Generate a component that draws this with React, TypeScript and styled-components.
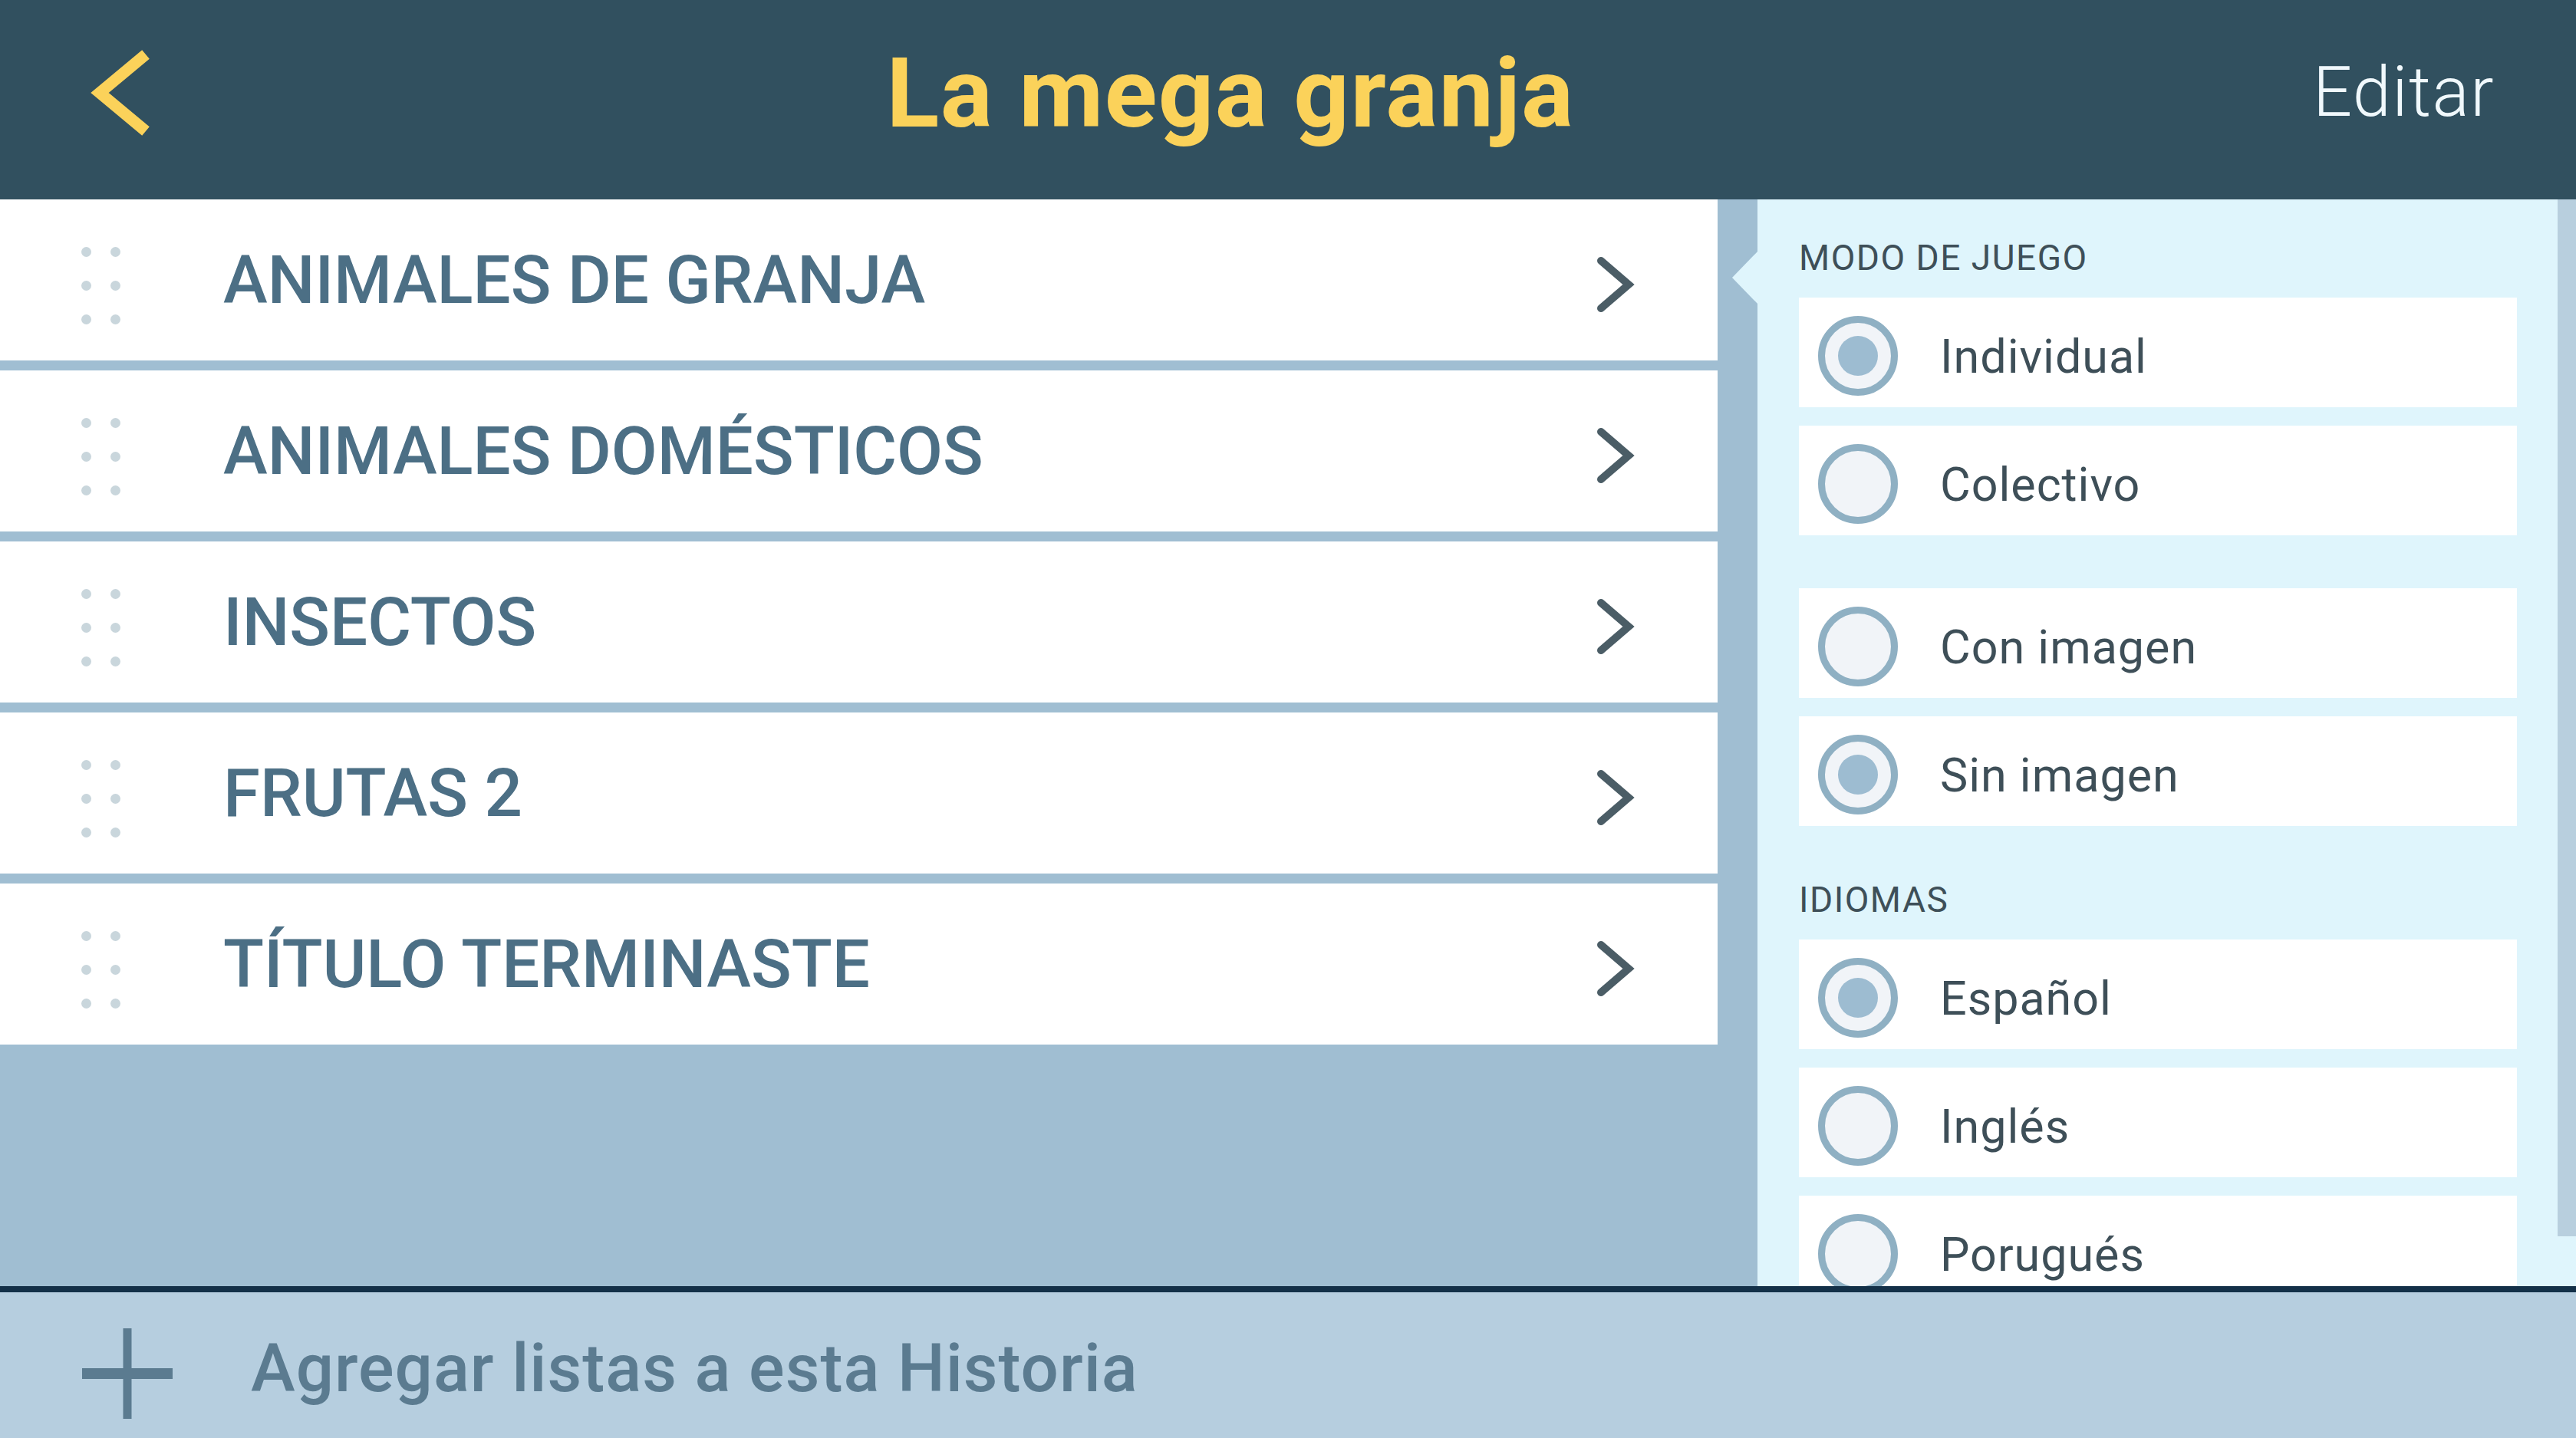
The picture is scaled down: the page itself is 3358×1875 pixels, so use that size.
import React from 'react';
import styled, { createGlobalStyle } from 'styled-components';

const colors = {
    header: '#31505f',
    title: '#fbd25a',
    editar: '#f0f8fc',
    listBg: '#a0bed2',
    rowText: '#4c6f85',
    chevron: '#4b5d66',
    dot: '#c9d6dc',
    panelBg: '#dff5fc',
    optionText: '#3e4f58',
    radioRing: '#8fb0c3',
    radioFill: '#f1f4f8',
    radioDot: '#9dbcd1',
    bottomLine: '#133048',
    bottomBg: '#b6cedf',
    addText: '#5b7b90',
    scroll: '#b8cfde'
};

const GlobalStyle = createGlobalStyle`
    html, body {
        margin: 0;
        padding: 0;
        background: ${colors.bottomBg};
    }
    * {
        box-sizing: border-box;
    }
`;

const Screen = styled.div`
    width: 3358px;
    height: 1875px;
    display: flex;
    flex-direction: column;
    overflow: hidden;
    font-family: Roboto, "Open Sans", sans-serif;
`;

const Header = styled.header`
    flex: none;
    height: 260px;
    background: ${colors.header};
    display: grid;
    grid-template-columns: 400px 1fr 400px;
    align-items: center;
    padding-bottom: 18px;
`;

const BackButton = styled.div`
    padding-left: 118px;
    display: flex;
    align-items: center;
`;

const Title = styled.h1`
    margin: 0;
    padding-right: 150px;
    text-align: center;
    color: ${colors.title};
    font-size: 127px;
    font-weight: 700;
    line-height: 1;
    letter-spacing: 1.5px;
`;

const EditButton = styled.div`
    justify-self: end;
    padding-right: 106px;
    color: ${colors.editar};
    font-size: 90px;
    font-weight: 300;
    line-height: 1;
    letter-spacing: 1.5px;
`;

const Main = styled.main`
    flex: none;
    height: 1417px;
    display: flex;
`;

const ListPane = styled.section`
    flex: none;
    width: 2291px;
    padding-right: 52px;
    background: ${colors.listBg};
    display: flex;
    flex-direction: column;
    gap: 13px;
`;

const Row = styled.div`
    height: 210px;
    background: #ffffff;
    display: flex;
    align-items: center;
    padding-left: 106px;
    padding-right: 106px;
`;

const DragHandle = styled.div`
    display: grid;
    grid-template-columns: repeat(2, 13px);
    grid-auto-rows: 13px;
    column-gap: 25px;
    row-gap: 31px;
    margin-top: 14px;
    margin-right: 134px;
`;

const Dot = styled.span`
    border-radius: 50%;
    background: ${colors.dot};
`;

const RowTitle = styled.div`
    flex: 1;
    color: ${colors.rowText};
    font-size: 87px;
    font-weight: 500;
    line-height: 1;
`;

const Chevron = styled.svg`
    flex: none;
    margin-top: 12px;
`;

const SidePanel = styled.aside`
    flex: 1;
    position: relative;
    background: ${colors.panelBg};
    display: flex;
`;

const Notch = styled.div`
    position: absolute;
    left: -33px;
    top: 67px;
    width: 0;
    height: 0;
    border-top: 35px solid transparent;
    border-bottom: 35px solid transparent;
    border-right: 34px solid ${colors.panelBg};
`;

const Options = styled.div`
    flex: none;
    width: 936px;
    margin-left: 54px;
    padding-top: 50px;
    display: flex;
    flex-direction: column;
    overflow: hidden;
`;

const GroupLabel = styled.div<{ $top?: number }>`
    flex: none;
    margin-top: ${p => p.$top ?? 0}px;
    margin-bottom: 26px;
    color: ${colors.optionText};
    font-size: 46px;
    font-weight: 400;
    line-height: 52px;
    letter-spacing: 1.5px;
`;

const OptionGroup = styled.div<{ $top?: number }>`
    flex: none;
    margin-top: ${p => p.$top ?? 0}px;
    display: flex;
    flex-direction: column;
    gap: 24px;
`;

const OptionBox = styled.div`
    flex: none;
    height: 143px;
    background: #ffffff;
    display: flex;
    align-items: center;
    padding-left: 25px;
    padding-top: 8px;
`;

const Radio = styled.span<{ $checked?: boolean }>`
    flex: none;
    width: 104px;
    height: 104px;
    border-radius: 50%;
    border: 9px solid ${colors.radioRing};
    background: ${colors.radioFill};
    display: flex;
    align-items: center;
    justify-content: center;
    margin-right: 55px;

    &::after {
        content: '';
        display: ${p => (p.$checked ? 'block' : 'none')};
        width: 52px;
        height: 52px;
        border-radius: 50%;
        background: ${colors.radioDot};
    }
`;

const OptionText = styled.span`
    color: ${colors.optionText};
    font-size: 61px;
    font-weight: 400;
    line-height: 1;
    letter-spacing: 1px;
    padding-top: 4px;
`;

const ScrollTrack = styled.div`
    flex: none;
    width: 24px;
    margin-left: auto;
    height: 1352px;
    background: ${colors.scroll};
`;

const BottomBar = styled.footer`
    flex: 1;
    border-top: 8px solid ${colors.bottomLine};
    background: ${colors.bottomBg};
    display: flex;
    align-items: center;
    padding-left: 107px;
    padding-top: 8px;
`;

const PlusWrap = styled.span`
    display: flex;
    margin-top: 14px;
`;

const AddText = styled.span`
    margin-left: 102px;
    color: ${colors.addText};
    font-size: 87px;
    font-weight: 500;
    line-height: 1;
    letter-spacing: 1px;
`;

const lists = [
    'ANIMALES DE GRANJA',
    'ANIMALES DOMÉSTICOS',
    'INSECTOS',
    'FRUTAS 2',
    'TÍTULO TERMINASTE'
];

type Option = { label: string; checked: boolean };

const gameMode: Option[] = [
    { label: 'Individual', checked: true },
    { label: 'Colectivo', checked: false }
];

const imageMode: Option[] = [
    { label: 'Con imagen', checked: false },
    { label: 'Sin imagen', checked: true }
];

const languages: Option[] = [
    { label: 'Español', checked: true },
    { label: 'Inglés', checked: false },
    { label: 'Porugués', checked: false }
];

const BackIcon = () => (
    <svg width="84" height="112" viewBox="0 0 84 112">
        <polyline points="72,6 12,56 72,106" fill="none" stroke={colors.title} strokeWidth="15" />
    </svg>
);

const ChevronIcon = () => (
    <Chevron width="54" height="74" viewBox="0 0 54 74">
        <polyline points="8,6 44,37 8,68" fill="none" stroke={colors.chevron} strokeWidth="10" strokeLinecap="round" strokeLinejoin="miter" />
    </Chevron>
);

const PlusIcon = () => (
    <svg width="118" height="118" viewBox="0 0 118 118">
        <line x1="59" y1="0" x2="59" y2="118" stroke={colors.addText} strokeWidth="11" />
        <line x1="0" y1="59" x2="118" y2="59" stroke={colors.addText} strokeWidth="14" />
    </svg>
);

const renderOptions = (options: Option[]) =>
    options.map(option => (
        <OptionBox key={option.label}>
            <Radio $checked={option.checked} />
            <OptionText>{option.label}</OptionText>
        </OptionBox>
    ));

const App: React.FC = () => {
    return (
        <React.Fragment>
            <GlobalStyle />
            <Screen>
                <Header>
                    <BackButton><BackIcon /></BackButton>
                    <Title>La mega granja</Title>
                    <EditButton>Editar</EditButton>
                </Header>
                <Main>
                    <ListPane>
                        {lists.map(name => (
                            <Row key={name}>
                                <DragHandle>
                                    {[0, 1, 2, 3, 4, 5].map(i => <Dot key={i} />)}
                                </DragHandle>
                                <RowTitle>{name}</RowTitle>
                                <ChevronIcon />
                            </Row>
                        ))}
                    </ListPane>
                    <SidePanel>
                        <Notch />
                        <Options>
                            <GroupLabel>MODO DE JUEGO</GroupLabel>
                            <OptionGroup>{renderOptions(gameMode)}</OptionGroup>
                            <OptionGroup $top={69}>{renderOptions(imageMode)}</OptionGroup>
                            <GroupLabel $top={70}>IDIOMAS</GroupLabel>
                            <OptionGroup>{renderOptions(languages)}</OptionGroup>
                        </Options>
                        <ScrollTrack />
                    </SidePanel>
                </Main>
                <BottomBar>
                    <PlusWrap><PlusIcon /></PlusWrap>
                    <AddText>Agregar listas a esta Historia</AddText>
                </BottomBar>
            </Screen>
        </React.Fragment>
    );
};

export default App;
